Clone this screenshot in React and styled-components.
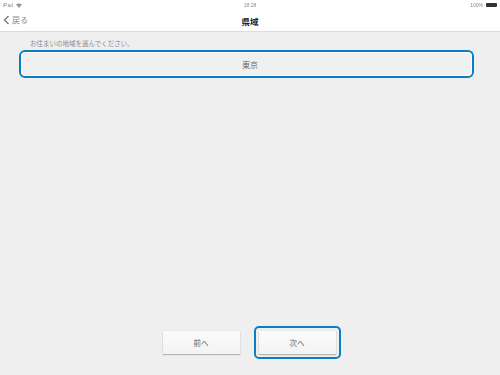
import React from "react";
import styled, { createGlobalStyle } from "styled-components";

const GlobalStyle = createGlobalStyle`
  html, body {
    margin: 0;
    padding: 0;
    background: #efefef;
  }
  body {
    font-family: "Noto Sans CJK JP", "Noto Sans", sans-serif;
  }
`;

export default function App() {
  return (
    <Page>
      <GlobalStyle />
      <StatusBar>
        <StatusLeft>
          <Tiny>iPad</Tiny>
          <svg width="6" height="5" viewBox="0 0 6 5">
            <path d="M0 1.5 Q3 -0.5 6 1.5 L3 5 Z" fill="#999" />
          </svg>
        </StatusLeft>
        <Tiny>18:28</Tiny>
        <StatusRight>
          <Tiny>100%</Tiny>
          <Battery />
        </StatusRight>
      </StatusBar>
      <NavBar>
        <BackButton>
          <svg width="7" height="10" viewBox="0 0 7 10">
            <path d="M5.5 1 L1.5 5 L5.5 9" fill="none" stroke="#7a7a7a" strokeWidth="1.4" />
          </svg>
          <span>戻る</span>
        </BackButton>
        <Title>県域</Title>
      </NavBar>
      <Body>
        <Prompt>お住まいの地域を選んでください。</Prompt>
        <Field>東京</Field>
        <Spacer />
        <Footer>
          <ButtonRing>
            <Button>前へ</Button>
          </ButtonRing>
          <ButtonRing focused>
            <Button>次へ</Button>
          </ButtonRing>
        </Footer>
      </Body>
    </Page>
  );
}

const Page = styled.div`
  width: 500px;
  height: 375px;
  display: flex;
  flex-direction: column;
  background: #efefef;
  overflow: hidden;
`;

const StatusBar = styled.div`
  height: 10px;
  background: #fff;
  display: flex;
  align-items: center;
  justify-content: space-between;
  padding: 0 3px;
  filter: blur(0.4px);
`;

const StatusLeft = styled.div`
  display: flex;
  align-items: center;
  gap: 3px;
  width: 60px;
`;

const StatusRight = styled.div`
  display: flex;
  align-items: center;
  justify-content: flex-end;
  gap: 3px;
  width: 60px;
`;

const Tiny = styled.span`
  font-family: "Liberation Sans", sans-serif;
  font-size: 5px;
  line-height: 5px;
  color: #888;
`;

const Battery = styled.div`
  width: 11px;
  height: 4px;
  background: #333;
  border-radius: 1px;
`;

const NavBar = styled.div`
  height: 21px;
  background: #fff;
  border-bottom: 1px solid #dcdcdc;
  display: flex;
  align-items: center;
  justify-content: center;
  position: relative;
`;

const BackButton = styled.div`
  position: absolute;
  left: 3px;
  top: 4px;
  display: flex;
  align-items: center;
  gap: 2px;
  font-size: 8px;
  color: #8a8a8a;
`;

const Title = styled.div`
  font-size: 8.5px;
  font-weight: bold;
  color: #222;
`;

const Body = styled.div`
  flex: 1;
  display: flex;
  flex-direction: column;
  padding: 0 26px 16px 19px;
`;

const Prompt = styled.div`
  font-size: 6.5px;
  color: #8c8c8c;
  margin: 7px 0 0 11px;
  line-height: 9px;
`;

const Field = styled.div`
  margin-top: 2px;
  height: 24px;
  border: 2px solid #0b7fc6;
  border-radius: 6px;
  box-shadow: inset 0 0 0 1px #fff;
  background: #f0f0f0;
  display: flex;
  align-items: center;
  justify-content: center;
  padding-left: 7px;
  font-size: 8px;
  color: #666;
`;

const Spacer = styled.div`
  flex: 1;
`;

const Footer = styled.div`
  display: flex;
  justify-content: center;
  gap: 9px;
  margin-left: 5px;
`;

const ButtonRing = styled.div`
  padding: 3px;
  border: 2px solid ${(p) => (p.focused ? "#0b7fc6" : "transparent")};
  border-radius: 5px;
`;

const Button = styled.div`
  width: 77px;
  height: 23px;
  background: linear-gradient(#fbfbfb, #f3f3f3);
  box-shadow: 0 1px 1px rgba(0, 0, 0, 0.22), 0 0 0 0.5px rgba(0, 0, 0, 0.06);
  display: flex;
  align-items: center;
  justify-content: center;
  font-size: 7.5px;
  color: #666;
`;
